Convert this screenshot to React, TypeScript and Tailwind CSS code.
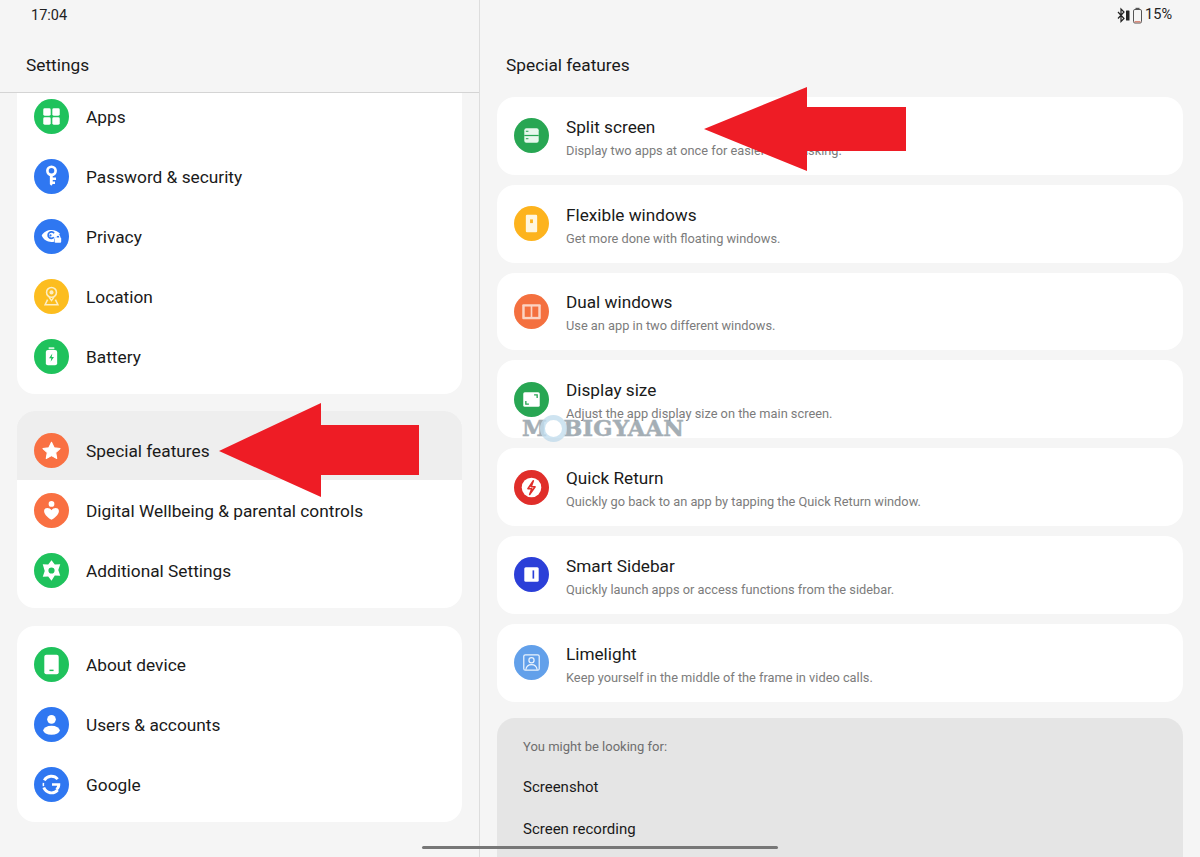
import React from "react";

const W = "#ffffff";
function Circle({ bg, children }: { bg: string; children: React.ReactNode }) {
  return (
    <svg width="35" height="35" viewBox="0 0 34 34" className="shrink-0">
      <circle cx="17" cy="17" r="17" fill={bg} />
      {children}
    </svg>
  );
}
const GREEN = "#1fc25c";
const BLUE = "#2f77f1";
const ORANGE = "#f97042";

const Apps = () => (
  <Circle bg={GREEN}>
    <rect x="9" y="9" width="7.2" height="7.2" rx="1.4" fill={W} />
    <rect x="17.8" y="9" width="7.2" height="7.2" rx="1.4" fill={W} />
    <rect x="9" y="17.8" width="7.2" height="7.2" rx="1.4" fill={W} />
    <rect x="17.8" y="17.8" width="7.2" height="7.2" rx="1.4" fill={W} />
  </Circle>
);
const Key = () => (
  <Circle bg={BLUE}>
    <circle cx="17" cy="11.500" r="4" fill="none" stroke={W} strokeWidth="2.600" />
    <path d="M15.400 15h2.800v3h3.200v2.400h-3.200v1.400h2.200v2.400h-2.200l-1.400 1.800-1.400-1.400z" fill={W} />
  </Circle>
);
const Privacy = () => (
  <Circle bg={BLUE}>
    <path d="M7.500 16c3-6 13-7.500 18-1.500l-3 1.500-3 3.500v2.500c-5 1-10-1-12-6z" fill={W} />
    <path d="M19.500 13.800a3.200 3.200 0 1 0-.2 4" fill="none" stroke={BLUE} strokeWidth="1.600" />
    <circle cx="16" cy="16" r="1.100" fill={BLUE} />
    <rect x="20" y="18" width="6.400" height="5" rx="1" fill={W} />
    <path d="M21.400 18.500v-1a1.800 1.800 0 0 1 3.600 0v1" fill="none" stroke={W} strokeWidth="1.100" />
  </Circle>
);
const Location = () => (
  <Circle bg="#fcbd1f">
    <circle cx="17" cy="13" r="4.800" fill="none" stroke="#fdeec4" strokeWidth="1.500" />
    <circle cx="17" cy="13" r="2" fill="#fdeec4" />
    <path d="M14.600 17.600 17 21l2.400-3.400" fill="none" stroke="#fdeec4" strokeWidth="1.400" />
    <path d="M13.200 20 10.800 25h12.400l-2.400-5" fill="none" stroke="#fdeec4" strokeWidth="1.500" />
  </Circle>
);
const Battery = () => (
  <Circle bg={GREEN}>
    <rect x="14.200" y="8" width="5.600" height="2" rx=".6" fill="#d8f5e2" />
    <rect x="11.500" y="10.600" width="11" height="15" rx="2" fill={W} />
    <path d="M17.800 14 14.600 18.600h2.200l-.6 3.400 3.200-4.600h-2.200z" fill={GREEN} />
  </Circle>
);
const Star = () => (
  <Circle bg={ORANGE}>
    <path d="M17 9l2.600 5.300 5.700.8-4.200 3.900 1 5.700-5.100-2.700-5.100 2.700 1-5.700-4.200-3.900 5.700-.8z" fill={W} stroke={W} strokeWidth="1" strokeLinejoin="round" />
  </Circle>
);
const Wellbeing = () => (
  <Circle bg={ORANGE}>
    <circle cx="17" cy="10.600" r="2.800" fill={W} />
    <path d="M17 26c-9-5-8.500-11.500-4.200-11.500 2 0 3.400 1 4.200 2.200.8-1.200 2.200-2.200 4.200-2.200C25.500 14.500 26 21 17 26z" fill={W} />
  </Circle>
);
const Gear = () => (
  <Circle bg={GREEN}>
    <path fillRule="evenodd" d="M17 7l3.200 4.200 5.300-.2-1.900 5.500 1.900 5.500-5.300-.2L17 26.900l-3.200-4.100-5.300.2 1.900-5.500L8.500 11l5.300.2zM17 14a3 3 0 1 0 0 6 3 3 0 0 0 0-6z" fill={W} />
  </Circle>
);
const Device = () => (
  <Circle bg={GREEN}>
    <rect x="10" y="7.500" width="14" height="19" rx="2" fill={W} />
    <rect x="15" y="22" width="4" height="1.400" fill={GREEN} />
  </Circle>
);
const User = () => (
  <Circle bg={BLUE}>
    <circle cx="17" cy="12" r="4.200" fill={W} />
    <ellipse cx="17" cy="22.600" rx="8" ry="4.300" fill={W} />
  </Circle>
);
const GoogleI = () => (
  <Circle bg={BLUE}>
    <path d="M23 11.800A8 8 0 0 0 10 13M9.500 20a8 8 0 0 0 13.500 2.400" fill="none" stroke={W} strokeWidth="2.800" />
    <path d="M9.200 15.500a8 8 0 0 0 0 3" fill="none" stroke={W} strokeWidth="1.500" />
    <path d="M17.500 15.800H25.500c.3 3-.8 5.500-2.500 6.800l-2.200-2c1-.7 1.500-1.500 1.700-2.500h-5z" fill={W} />
  </Circle>
);

const Split = () => (
  <Circle bg="#28a653">
    <rect x="10" y="10" width="14" height="14" rx="2" fill="#e8f7ed" />
    <rect x="10" y="16.400" width="14" height="1.200" fill="#28a653" />
    <rect x="11.500" y="12.400" width="2.500" height="1" fill="#28a653" />
    <rect x="11.500" y="19.600" width="2.500" height="1" fill="#28a653" />
  </Circle>
);
const Flexible = () => (
  <Circle bg="#fdb31d">
    <rect x="11.500" y="8.500" width="11" height="17" rx="1.200" fill="#fff6df" />
    <rect x="15.600" y="13" width="2.800" height="3.600" fill="#fdb31d" />
  </Circle>
);
const Dual = () => (
  <Circle bg="#f4703f">
    <rect x="8" y="10" width="18" height="14.500" rx="1" fill="#fbd3c3" />
    <rect x="10.400" y="12.200" width="5.800" height="10" fill="#f4703f" />
    <rect x="17.800" y="12.200" width="5.800" height="10" fill="#f4703f" />
  </Circle>
);
const DisplaySize = () => (
  <Circle bg="#28a653">
    <rect x="9" y="10" width="16" height="14" rx="1.500" fill={W} />
    <path d="M11.500 18.500v3h3M22.500 15.500v-3h-3" fill="none" stroke="#28a653" strokeWidth="1.300" />
  </Circle>
);
const QuickReturn = () => (
  <Circle bg="#e02e2a">
    <circle cx="17" cy="17" r="9.500" fill={W} />
    <path d="M18.800 10.500 13.500 18.200h3.800L15.200 23.800l5.300-7.500h-3.800z" fill="none" stroke="#e02e2a" strokeWidth="1.500" strokeLinejoin="round" />
  </Circle>
);
const Sidebar = () => (
  <Circle bg="#2b3fd8">
    <rect x="10" y="10" width="14" height="14" rx="1.500" fill={W} />
    <rect x="18" y="13" width="1.600" height="8" fill="#2b3fd8" />
  </Circle>
);
const Limelight = () => (
  <Circle bg="#62a0ea">
    <rect x="9.500" y="9.500" width="15" height="15" rx="1.500" fill="none" stroke="#eaf3fd" strokeWidth="1.200" />
    <circle cx="17" cy="14.800" r="2.500" fill="none" stroke="#eaf3fd" strokeWidth="1.200" />
    <path d="M11.500 24c.5-3.800 3-5 5.500-5s5 1.200 5.500 5" fill="none" stroke="#eaf3fd" strokeWidth="1.200" />
  </Circle>
);

function SettingRow({ icon, label, active }: { icon: React.ReactNode; label: string; active?: boolean }) {
  return (
    <div className={`flex h-[60px] items-center gap-[17px] pl-[17px] ${active ? "bg-[#eeeeee]" : ""}`}>
      {icon}
      <span className="pt-[4px] text-[17.3px] text-[#1a1a1a]">{label}</span>
    </div>
  );
}

function FeatureCard({ icon, title, desc }: { icon: React.ReactNode; title: string; desc: string }) {
  return (
    <div className="flex h-[77.8px] shrink-0 items-center gap-[17px] rounded-[18px] bg-white pl-[17px]">
      {icon}
      <div className="flex flex-col pt-[4px]">
        <span className="text-[17.2px] leading-[24px] text-[#1a1a1a]">{title}</span>
        <span className="mt-[2px] text-[12.8px] leading-[20px] text-[#7c7c7c]">{desc}</span>
      </div>
    </div>
  );
}

const features = [
  { icon: <Split />, title: "Split screen", desc: "Display two apps at once for easier multitasking." },
  { icon: <Flexible />, title: "Flexible windows", desc: "Get more done with floating windows." },
  { icon: <Dual />, title: "Dual windows", desc: "Use an app in two different windows." },
  { icon: <DisplaySize />, title: "Display size", desc: "Adjust the app display size on the main screen." },
  { icon: <QuickReturn />, title: "Quick Return", desc: "Quickly go back to an app by tapping the Quick Return window." },
  { icon: <Sidebar />, title: "Smart Sidebar", desc: "Quickly launch apps or access functions from the sidebar." },
  { icon: <Limelight />, title: "Limelight", desc: "Keep yourself in the middle of the frame in video calls." },
];

export default function App() {
  return (
    <div className="relative flex h-[857px] w-[1200px] overflow-hidden bg-[#f5f5f5] font-['Roboto',sans-serif]">
      <aside className="flex w-[480px] shrink-0 flex-col overflow-hidden border-r border-[#dddddd]">
        <div className="h-[30px] shrink-0 pl-[31px] pt-[7px] text-[14.5px] leading-[18px] text-[#222222]">17:04</div>
        <div className="flex h-[63px] shrink-0 items-center border-b border-[#d4d4d4] pl-[26px] pt-[10px] text-[17.3px] text-[#1a1a1a]">Settings</div>
        <div className="flex flex-col pl-[17px] pr-[17px]">
          <div className="h-[301px] overflow-hidden rounded-b-[18px] bg-white">
            <div className="-mt-[7px]">
              <SettingRow icon={<Apps />} label="Apps" />
              <SettingRow icon={<Key />} label="Password & security" />
              <SettingRow icon={<Privacy />} label="Privacy" />
              <SettingRow icon={<Location />} label="Location" />
              <SettingRow icon={<Battery />} label="Battery" />
            </div>
          </div>
          <div className="mt-[17px] h-[197px] overflow-hidden rounded-[18px] bg-white">
            <div className="bg-[#eeeeee] pt-[9px]">
              <SettingRow icon={<Star />} label="Special features" active />
            </div>
            <SettingRow icon={<Wellbeing />} label="Digital Wellbeing & parental controls" />
            <SettingRow icon={<Gear />} label="Additional Settings" />
          </div>
          <div className="mt-[18px] h-[196px] rounded-[18px] bg-white pt-[8px]">
            <SettingRow icon={<Device />} label="About device" />
            <SettingRow icon={<User />} label="Users & accounts" />
            <SettingRow icon={<GoogleI />} label="Google" />
          </div>
        </div>
      </aside>

      <main className="flex min-w-0 flex-1 flex-col pl-[17px] pr-[17px]">
        <div className="flex h-[30px] shrink-0 items-center justify-end gap-[2px] pr-[11px] text-[14.5px] text-[#222222]">
          <svg width="26" height="17" viewBox="0 0 26 17">
            <path d="M1 5l6 6.500-3 3V2l3 3-6 6.500" fill="none" stroke="#222222" strokeWidth="1.200" />
            <rect x="9" y="3.500" width="3.500" height="10" rx=".6" fill="#222222" />
            <rect x="16.500" y="2.500" width="8" height="13.500" rx="1.400" fill="none" stroke="#555555" strokeWidth="1" />
            <rect x="18.500" y=".8" width="4" height="1.700" fill="#555555" />
            <rect x="17.500" y="14" width="6" height="1.500" fill="#d98a7a" />
          </svg>
          <span>15%</span>
        </div>
        <div className="flex h-[67px] shrink-0 items-start pl-[9px] pt-[25px] text-[17.3px] leading-[21px] text-[#1a1a1a]">Special features</div>
        <div className="flex shrink-0 flex-col gap-[10px]">
          {features.map((f) => (
            <FeatureCard key={f.title} icon={f.icon} title={f.title} desc={f.desc} />
          ))}
        </div>
        <div className="mt-[16.500px] h-[160px] shrink-0 rounded-[18px] bg-[#e5e5e5] pl-[26px] pt-[20px]">
          <div className="text-[13px] leading-[18px] text-[#6e6e6e]">You might be looking for:</div>
          <div className="mt-[21px] text-[15px] leading-[20px] text-[#1a1a1a]">Screenshot</div>
          <div className="mt-[22px] text-[15px] leading-[20px] text-[#1a1a1a]">Screen recording</div>
        </div>
      </main>

      {/* annotation arrows */}
      <svg className="absolute left-[700px] top-[84px]" width="210" height="90" viewBox="700 84 210 90">
        <path d="M704 129 807 87V107H906V151H807V171Z" fill="#ee1c25" />
      </svg>
      <svg className="absolute left-[215px] top-[400px]" width="210" height="100" viewBox="215 400 210 100">
        <path d="M219 451 321 403V425H419V475H321V497Z" fill="#ee1c25" />
      </svg>

      {/* watermark */}
      <div className="pointer-events-none absolute left-[522px] top-[414px] flex h-[28px] items-center font-['DejaVu_Serif',serif] text-[22.500px] font-bold leading-[28px] tracking-[0.3px] text-[#8e9aa3] opacity-80 [-webkit-text-stroke:0.5px_#8e9aa3]">
        <span>M</span>
        <span className="-ml-[7.500px] h-[27px] w-[27px] shrink-0 rounded-full border-[5px] border-[#b5d6ea] opacity-80" />
        <span className="-ml-[3.500px]">BIGYAAN</span>
      </div>

      {/* home indicator */}
      <div className="absolute left-[422px] top-[846px] h-[3px] w-[356px] rounded-full bg-[#777777]" />
    </div>
  );
}
